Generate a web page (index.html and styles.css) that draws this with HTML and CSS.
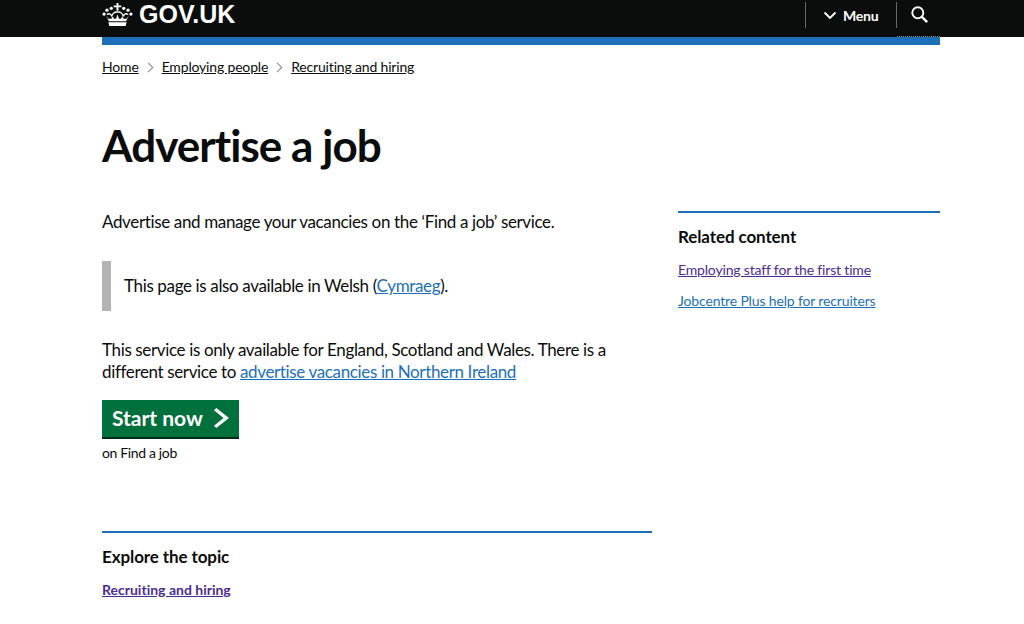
FILE: index.html
```html
<!DOCTYPE html>
<html lang="en">
<head>
<meta charset="utf-8">
<title>Advertise a job - GOV.UK</title>
<link rel="stylesheet" href="styles.css">
</head>
<body>
<header class="header">
  <div class="header-inner">
    <a class="logo" href="#">
      <svg class="crown" width="31" height="23" viewBox="0 0 32 24" fill="#fff" aria-hidden="true">
        <path d="M15 0h2v2.500h3v2h-3V8h-2V4.500h-3v-2h3z"/>
        <circle cx="9.500" cy="5.500" r="1.700"/><circle cx="22.500" cy="5.500" r="1.700"/>
        <circle cx="5" cy="7.500" r="1.700"/><circle cx="27" cy="7.500" r="1.700"/>
        <circle cx="2" cy="11.500" r="1.700"/><circle cx="30" cy="11.500" r="1.700"/>
        <path d="M5 12c2-1.500 4-1 5 2 .5-3 3-5 6-4.500 3-.5 5.500 1.500 6 4.500 1-3 3-3.500 5-2" fill="none" stroke="#fff" stroke-width="1.400"/>
        <path d="M4 12.500l3 6.500h18l3-6.500-2.500 4h-3l-1.500-2.500L19.500 16.500h-2L16 12l-1.500 4.500h-2L11 14l-1.500 2.500h-3z"/>
        <path d="M6.500 20h19l-1 4H7.500z"/>
      </svg>
      <span class="logo-text">GOV.UK</span>
    </a>
    <nav class="header-nav">
      <a class="menu" href="#">
        <svg width="14" height="9" viewBox="0 0 14 9" fill="none" stroke="#fff" stroke-width="1.800" aria-hidden="true"><path d="M1.500 1.500 7 7l5.500-5.500"/></svg>
        Menu
      </a>
      <a class="search" href="#" aria-label="Search">
        <svg width="17" height="17" viewBox="0 0 20 20" fill="none" stroke="#fff" stroke-width="2.200" aria-hidden="true"><circle cx="8" cy="8" r="6.500"/><path d="m12.500 12.500 6.500 6.500" stroke-width="2.800"/></svg>
      </a>
    </nav>
  </div>
</header>
<div class="container">
  <div class="blue-bar"></div>
  <nav class="breadcrumbs">
    <a href="#">Home</a>
    <svg class="chev" width="7" height="11" viewBox="0 0 7 11" fill="none" stroke="#8a8f91" stroke-width="1.100" aria-hidden="true"><path d="m1 .8 4.800 4.700L1 10.200"/></svg>
    <a href="#">Employing people</a>
    <svg class="chev" width="7" height="11" viewBox="0 0 7 11" fill="none" stroke="#8a8f91" stroke-width="1.100" aria-hidden="true"><path d="m1 .8 4.800 4.700L1 10.200"/></svg>
    <a href="#">Recruiting and hiring</a>
  </nav>
  <h1 class="title">Advertise a job</h1>
  <div class="columns">
    <main class="main">
      <p class="body lead">Advertise and manage your vacancies on the ‘Find a job’ service.</p>
      <div class="inset">This page is also available in Welsh (<a class="link" href="#">Cymraeg</a>).</div>
      <p class="body">This service is only available for England, Scotland and Wales. There is a different service to <a class="link" href="#">advertise vacancies in Northern Ireland</a></p>
      <a class="start" href="#">Start now
        <svg width="15" height="20" viewBox="0 0 15 20" fill="#fff" aria-hidden="true"><path d="M0 2.300 2.300 0 15 10 2.300 20 0 17.700 9.500 10z"/></svg>
      </a>
      <p class="on">on Find a job</p>
      <section class="explore">
        <h2 class="sub">Explore the topic</h2>
        <a class="visited strong" href="#">Recruiting and hiring</a>
      </section>
    </main>
    <aside class="aside">
      <h2 class="sub">Related content</h2>
      <ul class="related">
        <li><a class="visited" href="#">Employing staff for the first time</a></li>
        <li><a class="small-link" href="#">Jobcentre Plus help for recruiters</a></li>
      </ul>
    </aside>
  </div>
</div>
</body>
</html>
```
FILE: styles.css
```css
* { box-sizing: border-box; }
html, body { margin: 0; padding: 0; background: #fff; }
body { font-family: Lato, "Noto Sans", sans-serif; color: #0b0c0c; height: 624px; overflow: hidden; font-variant-ligatures: none; }
a { color: inherit; }
.header { background: #0b0c0c; height: 37px; }
.header-inner { margin: 0 84px 0 102px; height: 37px; display: flex; justify-content: space-between; align-items: flex-start; }
.logo { display: flex; align-items: flex-start; gap: 6px; text-decoration: none; color: #fff; }
.crown { margin-top: 3px; }
.logo-text { font-family: "Liberation Sans", sans-serif; font-weight: 700; font-size: 25px; line-height: 28px; }
.header-nav { display: flex; align-items: flex-start; height: 37px; }
.menu { display: flex; align-items: center; gap: 6px; height: 26px; margin-top: 2px; width: 92px; padding-left: 17px; color: #fff; text-decoration: none; font-weight: 700; font-size: 14px; letter-spacing: -0.2px; border-left: 1px solid #626a6e; border-right: 1px solid #626a6e; }
.search { display: block; height: 37px; padding: 6px 12px 0 14px; border-bottom: 1px dotted #8a9094; }
.container { margin: 0 84px 0 102px; width: 838px; }
.blue-bar { height: 8px; background: #1d70b8; }
.breadcrumbs { display: flex; align-items: center; margin-top: 13px; font-size: 14px; line-height: 18px; letter-spacing: -0.17px; }
.breadcrumbs a { color: #0b0c0c; }
.chev { margin: 0 8px; }
.title { margin: 44px 0 0; font-size: 44px; line-height: 50px; font-weight: 700; letter-spacing: -0.95px; }
.columns { display: flex; gap: 26px; margin-top: 41px; }
.main { width: 550px; }
.aside { width: 262px; border-top: 2px solid #1d70b8; padding-top: 13px; }
.body { margin: 0; font-size: 17px; line-height: 22px; letter-spacing: -0.36px; }
.inset { margin: 28px 0 28px; border-left: 9px solid #b1b4b6; padding: 14px 0 14px 13px; font-size: 17px; line-height: 22px; letter-spacing: -0.36px; }
.link { color: #1d70b8; }
.lead { margin-top: 0; }
.start { display: inline-flex; align-items: center; gap: 11px; margin-top: 17px; height: 39px; padding: 0 10px 4px 10px; background: #00703c; color: #fff; font-size: 21px; font-weight: 700; text-decoration: none; box-shadow: inset 0 -2px 0 #002d18; }
.on { margin: 5px 0 0; font-size: 14px; line-height: 18px; letter-spacing: -0.35px; }
.explore { margin-top: 69px; border-top: 2px solid #1d70b8; padding-top: 13px; }
.sub { margin: 0 0 11px; font-size: 17px; line-height: 22px; font-weight: 700; letter-spacing: -0.1px; }
.visited { color: #4c2c92; font-size: 14px; line-height: 18px; letter-spacing: -0.17px; }
.strong { font-weight: 700; letter-spacing: 0; }
.small-link { color: #1d70b8; font-size: 14px; line-height: 18px; letter-spacing: -0.15px; }
.related { list-style: none; margin: 0; padding: 0; display: flex; flex-direction: column; gap: 11px; }
```
